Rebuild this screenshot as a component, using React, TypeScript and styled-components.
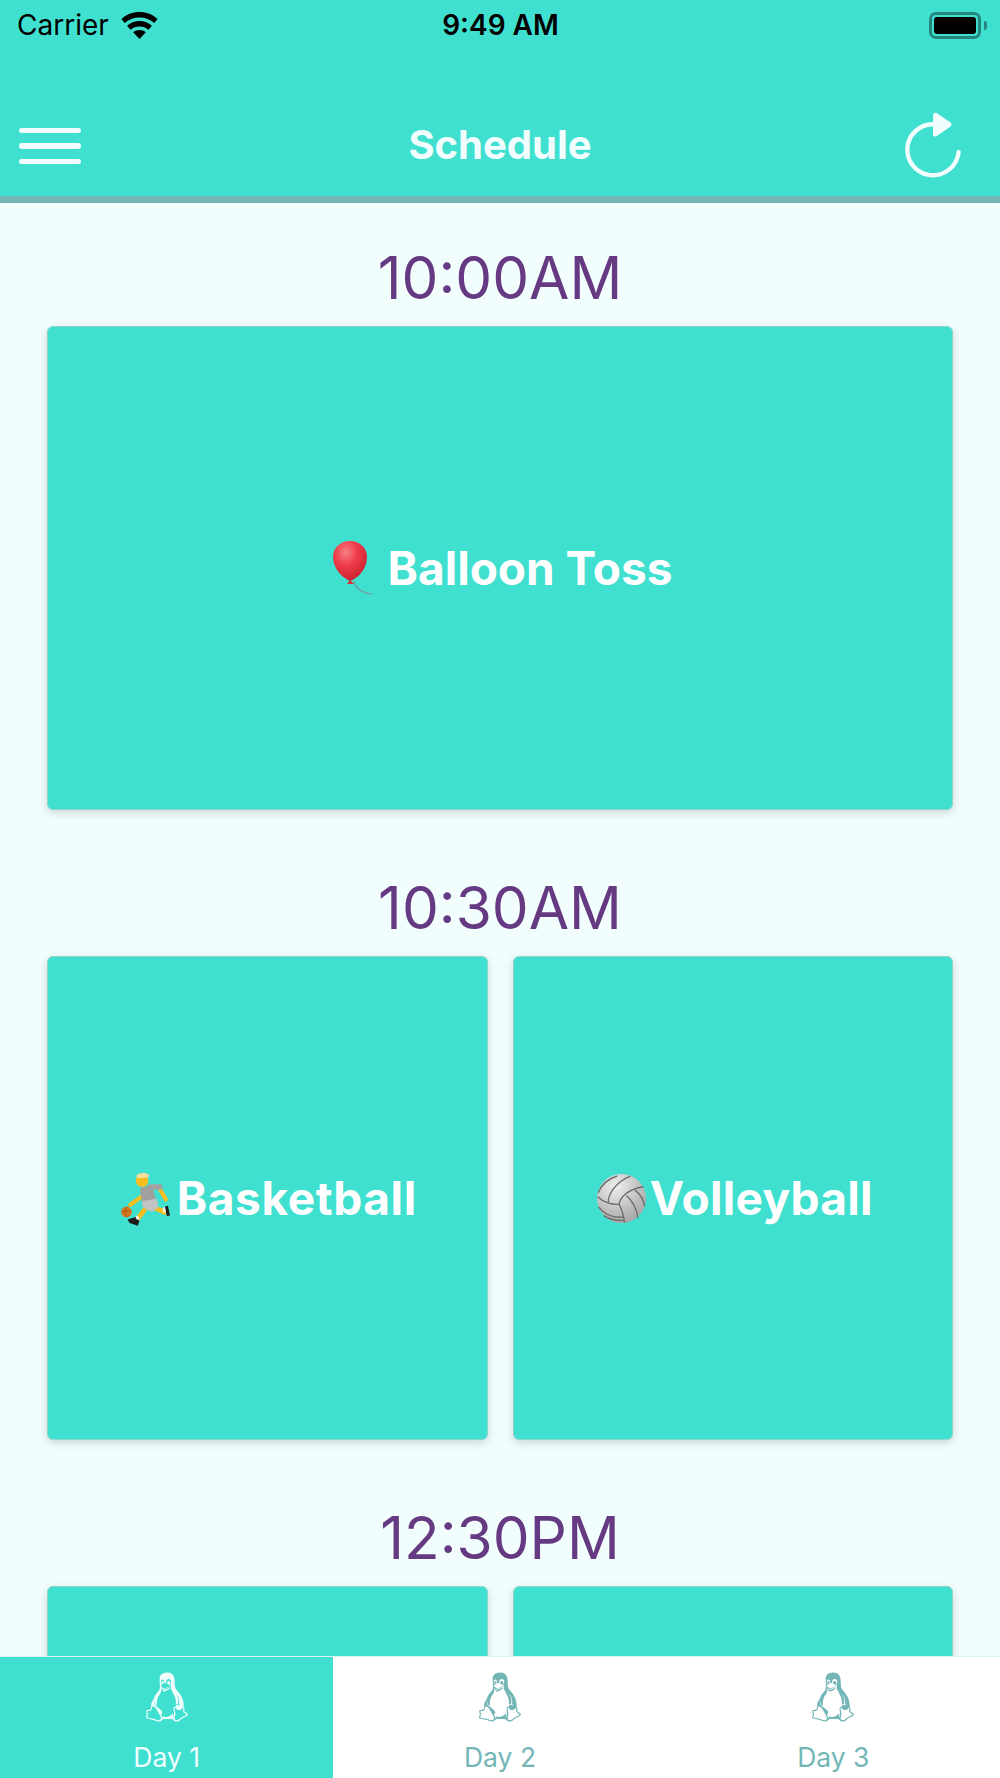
import React from "react";
import styled, { createGlobalStyle } from "styled-components";
import { IoIosRefresh, IoLogoTux } from "react-icons/io";

const Global = createGlobalStyle`
  html, body { margin: 0; padding: 0; background: #f2fefe; }
  body { font-family: Inter, "Liberation Sans", sans-serif; }
`;

const Page = styled.div`
  width: 1000px;
  height: 1778px;
  display: flex;
  flex-direction: column;
  overflow: hidden;
  background: #f2fefe;
`;

const Header = styled.header`
  flex: none;
  height: 196px;
  background: #40e0d0;
  border-bottom: 7px solid #74b6b6;
  display: flex;
  flex-direction: column;
`;

const StatusBar = styled.div`
  height: 50px;
  display: grid;
  grid-template-columns: 1fr auto 1fr;
  align-items: center;
  padding: 0 13px 0 17px;
  color: #000;
`;

const StatusLeft = styled.div`
  display: flex;
  align-items: center;
  gap: 12px;
  font-size: 28px;
`;

const StatusTime = styled.div`
  font-size: 28px;
  font-weight: 600;
  margin-left: -3px;
`;

const StatusRight = styled.div`
  display: flex;
  justify-content: flex-end;
  align-items: center;
`;

const Battery = styled.div`
  width: 52px;
  height: 27px;
  box-sizing: border-box;
  border: 3px solid #24877f;
  border-radius: 7px;
  padding: 2px;
  display: flex;
`;

const BatteryFill = styled.div`
  flex: 1;
  background: #000;
  border-radius: 3px;
`;

const BatteryCap = styled.div`
  width: 3px;
  height: 9px;
  margin-left: 3px;
  background: #24877f;
  border-radius: 0 3px 3px 0;
`;

const NavBar = styled.div`
  flex: 1;
  display: grid;
  grid-template-columns: 1fr auto 1fr;
  align-items: center;
  padding: 42px 19px 0;
  color: #f2fefe;
`;

const NavTitle = styled.h1`
  margin: 0;
  font-size: 40px;
  font-weight: 700;
  color: #f2fefe;
`;

const MenuButton = styled.div`
  width: 62px;
  display: flex;
  flex-direction: column;
  gap: 10px;
  margin-top: 4px;
`;

const MenuBar = styled.span`
  display: block;
  height: 5.5px;
  border-radius: 3px;
  background: #f2fefe;
`;

const RefreshButton = styled.div`
  display: flex;
  justify-content: flex-end;
  font-size: 74px;
  line-height: 0;
  margin-right: 11px;
  margin-top: 2px;
`;

const Content = styled.main`
  flex: 1;
  min-height: 0;
  overflow: hidden;
  padding: 0 47px;
`;

const Slot = styled.section`
  display: flex;
  flex-direction: column;
`;

const SlotTime = styled.div`
  height: 123px;
  box-sizing: border-box;
  padding-top: 35px;
  font-size: 58.5px;
  font-weight: 400;
  line-height: 80px;
  text-align: center;
  color: #663a82;
`;

const CardRow = styled.div`
  display: flex;
  gap: 25px;
  margin-bottom: 23px;
`;

const Card = styled.div`
  flex: 1;
  height: 484px;
  box-sizing: border-box;
  background: #40e0d0;
  border: 1px solid #8fd4cd;
  border-radius: 6px;
  box-shadow: 0 3px 8px rgba(0, 0, 0, 0.16);
  display: flex;
  align-items: center;
  justify-content: center;
  color: #fff;
  font-size: 46px;
  font-weight: 700;
`;

const CardLabel = styled.span<{ $track?: number }>`
  letter-spacing: ${(p) => p.$track ?? 0}px;
`;

const Emoji = styled.svg<{ $gap: number; $lead?: number }>`
  flex: none;
  margin-left: ${(p) => p.$lead ?? 0}px;
  margin-right: ${(p) => p.$gap}px;
`;

const TabBar = styled.nav`
  flex: none;
  height: 121px;
  display: flex;
  background: #fff;
  border-top: 1px solid #dff3f1;
`;

const Tab = styled.div<{ $active?: boolean }>`
  flex: 1;
  display: flex;
  flex-direction: column;
  align-items: center;
  padding-top: 12px;
  background: ${(p) => (p.$active ? "#40e0d0" : "#fff")};
  color: ${(p) => (p.$active ? "#f2fefe" : "#74b6b6")};
`;

const TabIcon = styled.div`
  font-size: 56px;
  line-height: 0;
`;

const TabLabel = styled.div`
  margin-top: 17px;
  font-size: 26.5px;
  line-height: 30px;
`;

const Balloon = () => (
  <Emoji $gap={13} $lead={5} width="42" height="54" viewBox="0 0 42 54">
    <defs>
      <radialGradient id="bl" cx="0.38" cy="0.28" r="0.75">
        <stop offset="0" stopColor="#f77f86" />
        <stop offset="0.45" stopColor="#ee3c48" />
        <stop offset="1" stopColor="#c9202f" />
      </radialGradient>
    </defs>
    <path d="M21 40c1 6 7 12 18 13" fill="none" stroke="#7d8f90" strokeWidth="1.2" />
    <path d="M17 0C7 0 0 7 0 16c0 11 9 21 17 24 9-3 17-13 17-24C34 7 27 0 17 0z" fill="url(#bl)" />
    <path d="M17 39l4 4h-7z" fill="#d92d3a" />
  </Emoji>
);

const Player = () => (
  <Emoji $gap={7} $lead={3} width="49" height="55" viewBox="65 30 142 158">
    <g fill="none" strokeLinecap="round" strokeLinejoin="round">
      <path d="M130 100L92 127" stroke="#f9bd1f" strokeWidth="12" />
      <path d="M178 82l17 30" stroke="#f9bd1f" strokeWidth="12" />
      <path d="M160 135l32 14" stroke="#f9bd1f" strokeWidth="14" />
      <path d="M138 135l-24 32" stroke="#f9bd1f" strokeWidth="14" />
      <path d="M150 76l28 0" stroke="#a2a2a2" strokeWidth="16" />
    </g>
    <path d="M120 78l35-6 12 42-42 6z" fill="#a0a0a0" />
    <path d="M125 116l44-6 4 24-18 14-26-12z" fill="#c2c2c2" />
    <path d="M192 133l9-3 6 28-9 2z" fill="#1b1b1b" />
    <path d="M186 138l6-6 3 16-7 3z" fill="#f1f1f1" />
    <path d="M84 170l26-8 8 12-4 14-24-8z" fill="#1b1b1b" />
    <path d="M108 158l10 4-2 10-8-4z" fill="#f1f1f1" />
    <circle cx="126" cy="58" r="18" fill="#f9bd1f" />
    <path d="M110 42c10-9 26-9 36-2l-1 8-34 2z" fill="#f6dd9c" />
    <circle cx="81" cy="148" r="15.500" fill="#d9771e" />
    <path d="M66 148c10-4 20-4 30 0M81 133c-4 10-4 20 0 30" fill="none" stroke="#8a4510" strokeWidth="1.500" />
  </Emoji>
);

const Ball = () => (
  <Emoji $gap={4} $lead={4} width="49" height="49" viewBox="52 40 146 146">
    <defs>
      <radialGradient id="vb" cx="0.38" cy="0.25" r="0.85">
        <stop offset="0" stopColor="#eeeeee" />
        <stop offset="1" stopColor="#9f9f9f" />
      </radialGradient>
    </defs>
    <circle cx="125" cy="113" r="73" fill="url(#vb)" />
    <g fill="none" stroke="#6c6c6c" strokeWidth="4">
      <path d="M118 130c2-18 25-45 72-52" />
      <path d="M118 130c8 16 14 36 16 55" />
      <path d="M118 130c-20 3-48-6-64-22" />
      <path d="M86 124c-2-24 24-62 66-78" />
      <path d="M56 96c10-26 30-42 56-50" />
      <path d="M140 104c14 12 32 40 34 68" />
      <path d="M165 88c14 10 26 30 29 48" />
      <path d="M56 138c18 22 46 34 76 30" />
      <path d="M72 164c16 10 36 16 60 14" />
    </g>
  </Emoji>
);

const App = () => (
  <Page>
    <Global />
    <Header>
      <StatusBar>
        <StatusLeft>
          Carrier
          <svg width="37" height="27" viewBox="0 0 37 27">
            <path d="M18.5 0C11.5 0 5.2 2.6 0.4 7l3.3 4C7.6 7.4 12.8 5.4 18.5 5.4S29.4 7.4 33.300 11l3.300-4C31.800 2.600 25.500 0 18.500 0z" />
            <path d="M18.500 9c-4.800 0-9.100 1.700-12.400 4.700l3.400 4c2.400-2.100 5.500-3.300 9-3.300s6.600 1.200 9 3.300l3.400-4C27.600 10.700 23.300 9 18.500 9z" />
            <path d="M18.500 18c-2.500 0-4.600.8-6.300 2.300l6.300 6.700 6.300-6.700C23.100 18.800 21 18 18.500 18z" />
          </svg>
        </StatusLeft>
        <StatusTime>9:49 AM</StatusTime>
        <StatusRight>
          <Battery>
            <BatteryFill />
          </Battery>
          <BatteryCap />
        </StatusRight>
      </StatusBar>
      <NavBar>
        <MenuButton>
          <MenuBar />
          <MenuBar />
          <MenuBar />
        </MenuButton>
        <NavTitle>Schedule</NavTitle>
        <RefreshButton>
          <IoIosRefresh />
        </RefreshButton>
      </NavBar>
    </Header>
    <Content>
      <Slot>
        <SlotTime>10:00AM</SlotTime>
        <CardRow>
          <Card>
            <Balloon />
            <CardLabel>Balloon Toss</CardLabel>
          </Card>
        </CardRow>
      </Slot>
      <Slot>
        <SlotTime>10:30AM</SlotTime>
        <CardRow>
          <Card>
            <Player />
            <CardLabel $track={0.6}>Basketball</CardLabel>
          </Card>
          <Card>
            <Ball />
            <CardLabel $track={0.3}>Volleyball</CardLabel>
          </Card>
        </CardRow>
      </Slot>
      <Slot>
        <SlotTime>12:30PM</SlotTime>
        <CardRow>
          <Card />
          <Card />
        </CardRow>
      </Slot>
    </Content>
    <TabBar>
      <Tab $active>
        <TabIcon>
          <IoLogoTux />
        </TabIcon>
        <TabLabel>Day 1</TabLabel>
      </Tab>
      <Tab>
        <TabIcon>
          <IoLogoTux />
        </TabIcon>
        <TabLabel>Day 2</TabLabel>
      </Tab>
      <Tab>
        <TabIcon>
          <IoLogoTux />
        </TabIcon>
        <TabLabel>Day 3</TabLabel>
      </Tab>
    </TabBar>
  </Page>
);

export default App;
